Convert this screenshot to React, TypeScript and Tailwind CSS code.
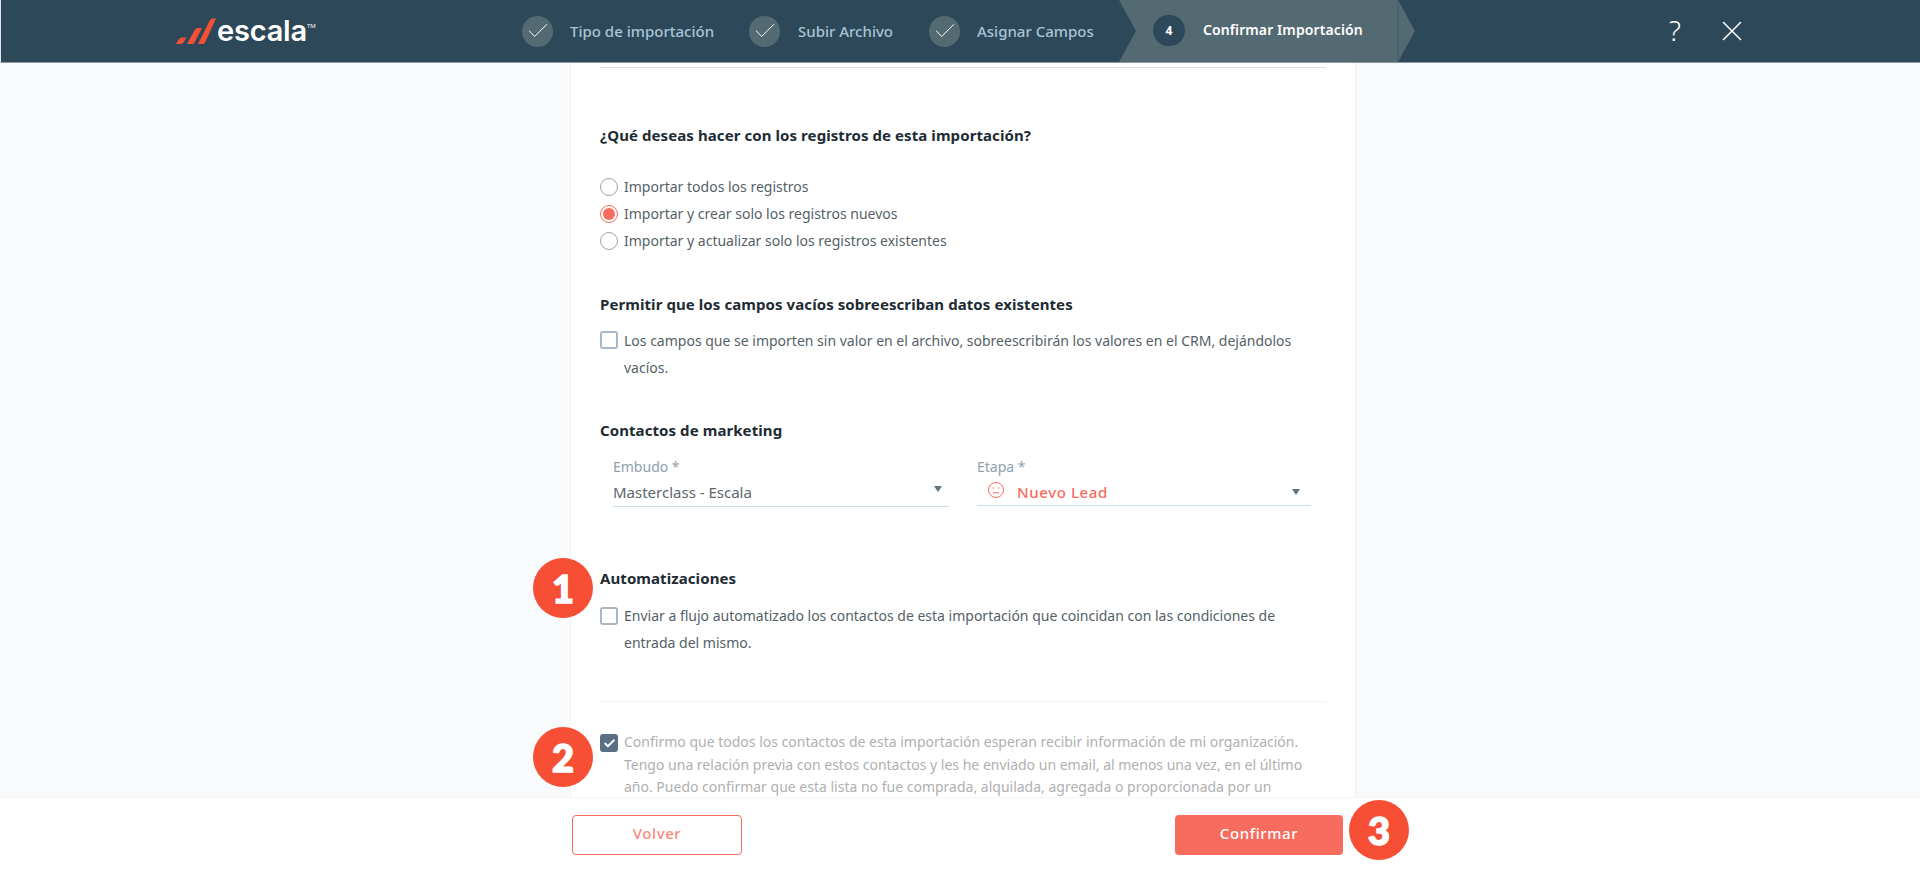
import { Check, X } from 'lucide-react';

const steps = [
  { label: 'Tipo de importación', circle: 'ml-[521px]', text: 'ml-[17px] w-[144px]' },
  { label: 'Subir Archivo', circle: 'ml-[35px]', text: 'ml-[18px] w-[97px]' },
  { label: 'Asignar Campos', circle: 'ml-[34px]', text: 'ml-[17px] w-[120px]' },
];

function Badge({ n, className }: { n: number; className: string }) {
  return (
    <div
      className={`absolute w-[60px] h-[60px] rounded-full bg-[#f74f35] text-white flex items-center justify-center text-[38px] font-black font-['Lato',sans-serif] [-webkit-text-stroke:1.5px_#ffffff] ${className}`}
    >
      {n}
    </div>
  );
}

function CheckBox() {
  return <span className="w-[18px] h-[18px] flex-shrink-0 rounded-[3px] border-2 border-[#a8b8c6] bg-white" />;
}

function Radio({ label, checked }: { label: string; checked?: boolean }) {
  return (
    <label className="flex items-center h-[27px]">
      <span
        className={`w-[18px] h-[18px] rounded-full flex items-center justify-center border ${
          checked ? 'border-[#f76c5e]' : 'border-[#a3a3a3]'
        }`}
      >
        {checked && <span className="w-[12px] h-[12px] rounded-full bg-[#f76c5e]" />}
      </span>
      <span className="ml-[6px] text-[#555f68]">{label}</span>
    </label>
  );
}

function Caret({ className }: { className: string }) {
  return (
    <svg viewBox="0 0 8 6" className={`w-[8px] h-[6px] ${className}`}>
      <path d="M0 0h8L4 6z" fill="#5f7485" />
    </svg>
  );
}

export default function App() {
  return (
    <div className="relative h-screen flex flex-col overflow-hidden bg-white font-['Noto_Sans',sans-serif] text-[14px]">
      {/* Header */}
      <header className="relative h-[63px] flex-shrink-0 flex items-center bg-[#2d4858] border-b border-l border-b-[#8b99a2] border-l-[#dfe5e8]">
        <svg viewBox="0 0 40 28" className="absolute left-[173px] top-[17px] w-[42px] h-[28px]">
          <g fill="#f74f35">
            <path d="M1 27L4 22Q5 20.5 7 20.5H11.5L8 26Q7 27 5.5 27z" />
            <path d="M12 27L20 12.5Q21 11 22.5 11H27L19.5 25.5Q18.5 27 17 27z" />
            <path d="M23 27L35 3Q36 1.5 37.5 1.5H41L30 25.5Q29 27 27.5 27z" />
          </g>
        </svg>
        <span className="absolute left-[216px] top-[13px] text-[29px] leading-[36px] font-semibold text-white font-['Inter',sans-serif] tracking-[-0.2px]">
          escala
        </span>
        <span className="absolute left-[306px] top-[22px] text-[6px] leading-[8px] text-white">TM</span>

        {steps.map((s) => (
          <div key={s.label} className="flex items-center">
            <span className={`${s.circle} w-[31px] h-[31px] rounded-full bg-[#546a73] flex items-center justify-center`}>
              <Check size={26} strokeWidth={0.9} color="#ffffff" />
            </span>
            <span className={`${s.text} whitespace-nowrap font-medium text-[15px] text-[#a9c4d6]`}>{s.label}</span>
          </div>
        ))}

        {/* Active step */}
        <svg viewBox="0 0 296 62" className="absolute left-[1118px] top-0 w-[296px] h-[62px]">
          <path d="M0 0H279V62H0L17 31z" fill="#546a73" />
          <path d="M279 0L296 31L279 62z" fill="#546a73" />
          <path d="M279 0V62" stroke="#3d5a6b" />
        </svg>
        <span className="absolute left-[1152px] top-[15px] w-[32px] h-[31px] rounded-full bg-[#2d4858] flex items-center justify-center text-white text-[12px] font-bold">
          4
        </span>
        <span className="absolute left-[1202px] top-[20px] leading-[20px] whitespace-nowrap font-semibold tracking-[0.1px] text-white">
          Confirmar Importación
        </span>

        <span className="absolute left-[1668px] top-[13px] text-white text-[28px] leading-[34px] font-light">?</span>
        <X size={34} strokeWidth={1.1} color="#ffffff" className="absolute left-[1714px] top-[14px]" />
      </header>

      {/* Body */}
      <main className="flex-1 min-h-0 overflow-hidden bg-[#f9fafc]">
        <div className="ml-[570px] w-[786px] h-full bg-white border-x border-[#eef1f5] pl-[29px] pr-[29px] overflow-hidden">
          <div className="mt-[4px] h-px bg-[#d5e2ea]" />

          <h2 className="mt-[57px] h-[20px] leading-[20px] text-[15px] font-bold tracking-[0.08px] text-[#212b33]">
            ¿Qué deseas hacer con los registros de esta importación?
          </h2>
          <div className="mt-[28px]">
            <Radio label="Importar todos los registros" />
            <Radio label="Importar y crear solo los registros nuevos" checked />
            <Radio label="Importar y actualizar solo los registros existentes" />
          </div>

          <h2 className="mt-[40px] h-[20px] leading-[20px] text-[15px] font-bold tracking-[0.08px] text-[#212b33]">
            Permitir que los campos vacíos sobreescriban datos existentes
          </h2>
          <div className="mt-[13px] flex items-start">
            <span className="mt-[4px] flex"><CheckBox /></span>
            <p className="ml-[6px] leading-[27px] text-[#555f68]">
              Los campos que se importen sin valor en el archivo, sobreescribirán los valores en el CRM, dejándolos
              vacíos.
            </p>
          </div>

          <h2 className="mt-[39px] h-[20px] leading-[20px] text-[15px] font-bold tracking-[0.08px] text-[#212b33]">
            Contactos de marketing
          </h2>
          <div className="mt-[18px] ml-[13px] flex gap-[28px]">
            <div className="w-[336px]">
              <div className="h-[18px] leading-[18px] text-[14px] text-[#8fa0ad]">Embudo *</div>
              <div className="mt-[6px] h-[25px] flex items-start justify-between border-b border-[#c9dcea] pr-[7px]">
                <span className="leading-[20px] text-[15px] text-[#5c666e]">Masterclass - Escala</span>
                <Caret className="mt-[4px]" />
              </div>
            </div>
            <div className="w-[334px]">
              <div className="h-[18px] leading-[18px] text-[14px] text-[#8fa0ad]">Etapa *</div>
              <div className="mt-[6px] h-[24px] flex items-start border-b border-[#c9dcea] pr-[11px]">
                <svg viewBox="0 0 18 18" className="ml-[10px] -mt-[1px] w-[18px] h-[18px]" fill="none" stroke="#f76c5e">
                  <circle cx="9" cy="9" r="7.5" />
                  <circle cx="6.3" cy="7" r="0.7" fill="#f76c5e" stroke="none" />
                  <circle cx="11.7" cy="7" r="0.7" fill="#f76c5e" stroke="none" />
                  <path d="M6 11.8h6" />
                </svg>
                <span className="ml-[12px] leading-[20px] text-[15px] font-medium tracking-[0.6px] text-[#f76c5e]">Nuevo Lead</span>
                <Caret className="ml-auto mt-[7px]" />
              </div>
            </div>
          </div>

          <h2 className="mt-[61px] h-[20px] leading-[20px] text-[15px] font-bold tracking-[0.08px] text-[#212b33]">Automatizaciones</h2>
          <div className="mt-[14px] flex items-start">
            <span className="mt-[5px] flex"><CheckBox /></span>
            <p className="ml-[6px] leading-[27px] text-[#555f68]">
              Enviar a flujo automatizado los contactos de esta importación que coincidan con las condiciones de
              entrada del mismo.
            </p>
          </div>

          <div className="mt-[45px] h-px bg-[#eff2f5]" />

          <div className="mt-[29px] flex items-start">
            <span className="mt-[3px] w-[18px] h-[18px] flex-shrink-0 rounded-[3px] bg-[#5b7085] flex items-center justify-center">
              <Check size={13} strokeWidth={3.5} color="#ffffff" />
            </span>
            <p className="ml-[6px] pr-[8px] leading-[22.5px] text-[#b0b0b0]">
              Confirmo que todos los contactos de esta importación esperan recibir información de mi organización.
              Tengo una relación previa con estos contactos y les he enviado un email, al menos una vez, en el último
              año. Puedo confirmar que esta lista no fue comprada, alquilada, agregada o proporcionada por un tercero.
            </p>
          </div>
        </div>
      </main>

      {/* Footer */}
      <footer className="h-[73px] flex-shrink-0 flex items-start bg-white border-t border-[#f4f4f4] pt-[17px]">
        <button className="ml-[572px] w-[170px] h-[40px] pb-[3px] rounded-[4px] border border-[#f76c5e] bg-white text-[#f98a7e] text-[15px] font-medium tracking-[0.6px]">
          Volver
        </button>
        <button className="ml-[433px] w-[168px] h-[40px] pb-[3px] rounded-[4px] bg-[#f76c5e] text-white text-[15px] font-medium tracking-[0.6px]">
          Confirmar
        </button>
      </footer>

      <Badge n={1} className="left-[533px] top-[558px]" />
      <Badge n={2} className="left-[533px] top-[727px]" />
      <Badge n={3} className="left-[1349px] top-[800px]" />
    </div>
  );
}
